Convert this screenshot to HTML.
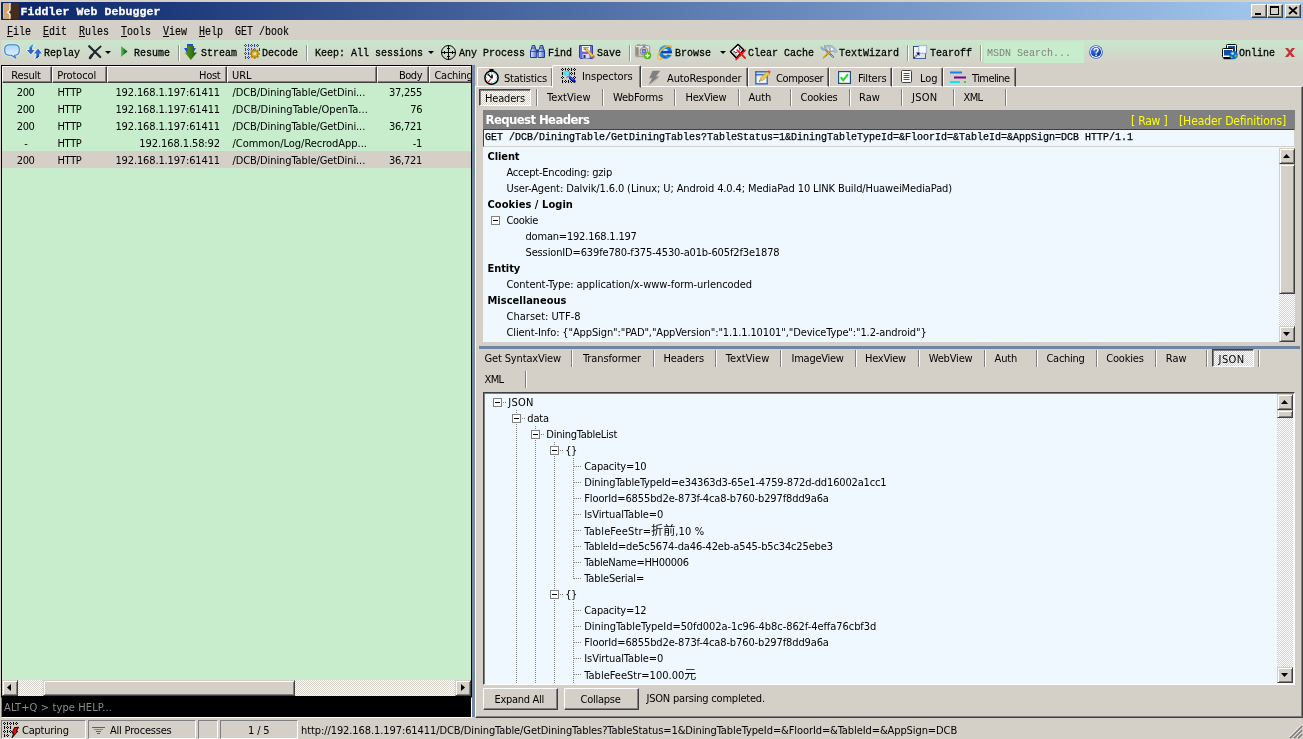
<!DOCTYPE html>
<html><head><meta charset="utf-8"><title>Fiddler Web Debugger</title>
<style>
*{box-sizing:border-box;margin:0;padding:0}
html,body{width:1303px;height:739px;overflow:hidden;background:#d4d0c8}
body{position:relative;will-change:transform;font-family:"DejaVu Sans Condensed","Liberation Sans","Noto Sans CJK SC",sans-serif;font-size:11px;letter-spacing:-0.1px;color:#000;line-height:16px}
.a{position:absolute;white-space:nowrap}
.m{font-family:"Liberation Mono","Noto Sans CJK SC",monospace;font-size:11.5px;letter-spacing:0.1px;font-weight:bold;-webkit-text-stroke:0.3px #fff}
.m12{font-family:"Liberation Mono","Noto Sans CJK SC",monospace;font-size:11.8px;letter-spacing:0;font-weight:normal;-webkit-text-stroke:0.3px #000;transform:scaleX(0.8475);transform-origin:0 0}
u{text-decoration:underline}
svg{position:absolute;overflow:visible}
#title{left:1px;top:2px;width:1302px;height:18px;background:linear-gradient(90deg,#0a246a 0%,#a6caf0 100%)}
.wb{top:2px;width:16px;height:14px;background:#d4d0c8;border:1px solid;border-color:#fff #404040 #404040 #fff;box-shadow:inset -1px -1px 0 #808080}
#tb{left:1px;top:40px;width:1302px;height:23px;background:linear-gradient(180deg,#c9e7cc 0%,#d4d2c8 100%)}
.tx{top:5px;line-height:16px}
.sep{top:5px;width:2px;height:16px;border-left:1px solid #8c9a8c;border-right:1px solid #fff}
#list{left:1px;top:65px;width:471px;height:632px;background:#c7edcc;border:1px solid #000;overflow:hidden}
.hd{top:0;height:17px;background:#d4d0c8;border:1px solid;border-color:#fff #404040 #404040 #fff;box-shadow:inset -1px -1px 0 #808080;line-height:15px}
.row{left:0;width:469px;height:17px;line-height:17px}
.row span{position:absolute;top:1px}
.raised{background:#d4d0c8;border:1px solid;border-color:#fff #404040 #404040 #fff;box-shadow:inset -1px -1px 0 #808080}
.sbtn{background:#d4d0c8;border:1px solid;border-color:#d4d0c8 #404040 #404040 #d4d0c8;box-shadow:inset 1px 1px 0 #fff,inset -1px -1px 0 #808080}
.sunk{border:1px solid;border-color:#808080 #fff #fff #808080}
.vs{width:2px;border-left:1px solid #808080;border-right:1px solid #fff}
.dith{background-color:#d4d0c8;background-image:conic-gradient(#fff 25%,#d4d0c8 0 50%,#fff 0 75%,#d4d0c8 0);background-size:2px 2px}
.tab{top:3px;height:19px;border:1px solid;border-color:#fff #404040 transparent #fff;border-radius:2px 2px 0 0;box-shadow:inset -1px 0 0 #808080}
.tab.sel{top:0;height:23px;background:#d4d0c8;z-index:2}
.tl{position:absolute;top:2px;line-height:16px}
.h{font-weight:bold}
.hdot{height:1px;background:repeating-linear-gradient(90deg,#808080 0 1px,transparent 1px 2px)}
.vdot{width:1px;background:repeating-linear-gradient(180deg,#808080 0 1px,transparent 1px 2px)}
</style></head><body>
<div class="a" id="title">
<svg style="left:2px;top:1px" width="16" height="16" viewBox="0 0 16 16"><rect x="0" y="0" width="16" height="16" rx="1.2" fill="#452c1c"/><path d="M1.2 0H7.2C6 2 7.4 5 6.6 7.4L4.4 9.3L6.6 11C7.6 13 6 15 7 16H1.2Q0 16 0 14.8V1.2Q0 0 1.2 0Z" fill="#d2a670"/><path d="M0.5 0.5V15.5" stroke="#e8b878" stroke-width="1"/><path d="M7.4 0C6.2 2 7.6 5 6.8 7.4L4.6 9.3L6.8 11C7.8 13 6.2 15 7.2 16" fill="none" stroke="#fff" stroke-width="1.3"/></svg>
<div class="a m" style="left:19.5px;top:1px;color:#fff;line-height:18px">Fiddler Web Debugger</div>
<div class="a wb" style="left:1250px"><svg style="left:3px;top:8px" width="6" height="2"><rect width="6" height="2" fill="#000"/></svg></div>
<div class="a wb" style="left:1266px"><svg style="left:2px;top:1px" width="9" height="9"><path d="M0 0H9V9H0Z M1 2V8H8V2Z" fill="#000" fill-rule="evenodd"/></svg></div>
<div class="a wb" style="left:1284px"><svg style="left:3px;top:2px" width="8" height="7"><path d="M0 0L8 7M8 0L0 7" stroke="#000" stroke-width="1.7"/></svg></div>
</div>
<div class="a m12" style="left:7px;top:24px;line-height:17px;font-size:12.6px;transform:scaleX(0.7937);-webkit-text-stroke:0.15px #000"><u>F</u>ile</div>
<div class="a m12" style="left:43px;top:24px;line-height:17px;font-size:12.6px;transform:scaleX(0.7937);-webkit-text-stroke:0.15px #000"><u>E</u>dit</div>
<div class="a m12" style="left:79px;top:24px;line-height:17px;font-size:12.6px;transform:scaleX(0.7937);-webkit-text-stroke:0.15px #000"><u>R</u>ules</div>
<div class="a m12" style="left:121px;top:24px;line-height:17px;font-size:12.6px;transform:scaleX(0.7937);-webkit-text-stroke:0.15px #000"><u>T</u>ools</div>
<div class="a m12" style="left:163px;top:24px;line-height:17px;font-size:12.6px;transform:scaleX(0.7937);-webkit-text-stroke:0.15px #000"><u>V</u>iew</div>
<div class="a m12" style="left:199px;top:24px;line-height:17px;font-size:12.6px;transform:scaleX(0.7937);-webkit-text-stroke:0.15px #000"><u>H</u>elp</div>
<div class="a m12" style="left:235px;top:24px;line-height:17px;font-size:12.6px;transform:scaleX(0.7937);-webkit-text-stroke:0.15px #000">GET /book</div>
<div class="a" id="tb">
<div class="a m12 tx" style="left:43px;">Replay</div>
<div class="a m12 tx" style="left:133px;">Resume</div>
<div class="a sep" style="left:177px"></div>
<div class="a m12 tx" style="left:200px;">Stream</div>
<div class="a m12 tx" style="left:261px;">Decode</div>
<div class="a sep" style="left:305px"></div>
<div class="a m12 tx" style="left:314px;">Keep: All sessions</div>
<div class="a m12 tx" style="left:458px;">Any Process</div>
<div class="a m12 tx" style="left:547px;">Find</div>
<div class="a m12 tx" style="left:595.5px;">Save</div>
<div class="a sep" style="left:628px"></div>
<div class="a m12 tx" style="left:674px;">Browse</div>
<div class="a m12 tx" style="left:746.5px;">Clear Cache</div>
<div class="a m12 tx" style="left:838px;">TextWizard</div>
<div class="a sep" style="left:906px"></div>
<div class="a m12 tx" style="left:928.5px;">Tearoff</div>
<div class="a sep" style="left:979px"></div>
<div class="a" style="left:983px;top:2px;width:100px;height:21px;background:#c7edcc"></div>
<div class="a m12 tx" style="left:985.5px;color:#808080;-webkit-text-stroke:0">MSDN Search...</div>
<div class="a m12 tx" style="left:1238px;">Online</div>
<svg style="left:0;top:0" width="0" height="0"><defs><linearGradient id="gb" x1="0" y1="0" x2="0" y2="1"><stop offset="0" stop-color="#a8d4ff"/><stop offset="1" stop-color="#eef7ff"/></linearGradient><linearGradient id="gg" x1="0" y1="0" x2="1" y2="0"><stop offset="0" stop-color="#62c062"/><stop offset="0.6" stop-color="#1a7a1a"/><stop offset="1" stop-color="#0a5a0a"/></linearGradient><linearGradient id="gs" x1="0" y1="0" x2="1" y2="0"><stop offset="0" stop-color="#5a9a1e"/><stop offset="1" stop-color="#1e5a0a"/></linearGradient><radialGradient id="gh" cx="0.35" cy="0.3" r="0.8"><stop offset="0" stop-color="#3a7af0"/><stop offset="1" stop-color="#0a2a9a"/></radialGradient><linearGradient id="gbi" x1="0" y1="0" x2="1" y2="0"><stop offset="0" stop-color="#e8f0ff"/><stop offset="1" stop-color="#4a6ac8"/></linearGradient></defs></svg>
<svg style="left:3px;top:4px" width="16" height="15" viewBox="0 0 16 15"><path d="M5.5 0.7H10.5Q15.3 0.7 15.3 5.2V6.8Q15.3 11.3 10.5 11.3H10.4L12 14.3L7.3 11.3H5.5Q0.7 11.3 0.7 6.8V5.2Q0.7 0.7 5.5 0.7Z" fill="url(#gb)" stroke="#fff" stroke-width="2.4" stroke-linejoin="round" opacity="0.55"/><path d="M5.5 0.7H10.5Q15.3 0.7 15.3 5.2V6.8Q15.3 11.3 10.5 11.3H10.4L12 14.3L7.3 11.3H5.5Q0.7 11.3 0.7 6.8V5.2Q0.7 0.7 5.5 0.7Z" fill="url(#gb)" stroke="#3a7cc8" stroke-width="1.1" stroke-linejoin="round"/></svg>
<svg style="left:26px;top:4px" width="15" height="15" viewBox="0 0 15 15"><g stroke="#fff" stroke-width="1.6" stroke-linejoin="round" opacity="0.6"><path d="M7.5 0.6Q4.6 1.2 5.2 6H7.6L3.8 10.6L0 6H2.4Q1.6 1.2 7.5 0.6Z"/><path d="M11 4.6L15 9.4H12.4Q12.8 13.6 8 14.6Q9.8 13 9.4 9.4H7Z"/></g><path d="M7.5 0.6Q4.6 1.2 5.2 6H7.6L3.8 10.6L0 6H2.4Q1.6 1.2 7.5 0.6Z" fill="#2a6ad0"/><path d="M7.5 0.6Q5.4 1 5.1 3.2L2.4 3.6Q3 1 7.5 0.6Z" fill="#28b0e0"/><path d="M11 4.6L15 9.4H12.4Q12.8 13.6 8 14.6Q9.8 13 9.4 9.4H7Z" fill="#2a6ad0"/><path d="M10.4 12Q10 13.6 8 14.6Q11.6 13.8 12.2 11.4Z" fill="#143a90"/></svg>
<svg style="left:87px;top:5px" width="14" height="14" viewBox="0 0 14 14"><path d="M1.2 1.2L12.2 12" stroke="#22262c" stroke-width="2.3" stroke-linecap="round"/><path d="M12.6 1.6Q7 6 2.2 12.6" stroke="#22262c" stroke-width="1.9" stroke-linecap="round" fill="none"/><path d="M4 10L2 13" stroke="#22262c" stroke-width="2.6" stroke-linecap="round"/></svg>
<svg style="left:104px;top:11px" width="6" height="3" viewBox="0 0 6 3"><path d="M0 0H6L3 3Z" fill="#000"/></svg>
<svg style="left:120px;top:6px" width="7" height="11" viewBox="0 0 7 11"><path d="M0 0L6.5 5.5L0 11Z" fill="url(#gg)"/></svg>
<svg style="left:183px;top:4px" width="13" height="16" viewBox="0 0 13 16"><path d="M3 0H9V4H12L9 9H3L0 4H3Z" fill="#1e4ae0"/><path d="M3.5 2H10V8.5H13L6.8 16L0.8 8.5H3.5Z" fill="url(#gs)"/></svg>
<svg style="left:243px;top:4px" width="16" height="15" viewBox="0 0 16 15"><path d="M1 0h1v1h-1zM0 1h1v1h-1zM2 1h1v1h-1zM1 2h1v1h-1zM4 0h1v3h-1zM7 0h1v1h-1zM6 1h1v1h-1zM8 1h1v1h-1zM7 2h1v1h-1zM10 0h1v3h-1zM13 0h1v1h-1zM12 1h1v1h-1zM14 1h1v1h-1zM13 2h1v1h-1zM1 4h1v3h-1zM4 4h1v1h-1zM3 5h1v1h-1zM5 5h1v1h-1zM4 6h1v1h-1zM7 4h1v3h-1zM10 4h1v1h-1zM9 5h1v1h-1zM11 5h1v1h-1zM10 6h1v1h-1zM15 4h1v3h-1zM1 8h1v1h-1zM0 9h1v1h-1zM2 9h1v1h-1zM1 10h1v1h-1zM4 8h1v3h-1zM7 8h1v1h-1zM6 9h1v1h-1zM8 9h1v1h-1zM7 10h1v1h-1zM1 12h1v3h-1zM4 12h1v1h-1zM3 13h1v1h-1zM5 13h1v1h-1zM4 14h1v1h-1z" fill="#2a3cc0" shape-rendering="crispEdges"/><g transform="translate(10.7,9.8)"><rect x="-1.1" y="-5.2" width="2.2" height="3" fill="#c09410" transform="rotate(0)"/><rect x="-1.1" y="-5.2" width="2.2" height="3" fill="#c09410" transform="rotate(45)"/><rect x="-1.1" y="-5.2" width="2.2" height="3" fill="#c09410" transform="rotate(90)"/><rect x="-1.1" y="-5.2" width="2.2" height="3" fill="#c09410" transform="rotate(135)"/><rect x="-1.1" y="-5.2" width="2.2" height="3" fill="#c09410" transform="rotate(180)"/><rect x="-1.1" y="-5.2" width="2.2" height="3" fill="#c09410" transform="rotate(225)"/><rect x="-1.1" y="-5.2" width="2.2" height="3" fill="#c09410" transform="rotate(270)"/><rect x="-1.1" y="-5.2" width="2.2" height="3" fill="#c09410" transform="rotate(315)"/><circle r="3.5" fill="#dcb020" stroke="#8a6a08" stroke-width="0.7"/><circle r="1.5" fill="#cfe6d0"/></g></svg>
<svg style="left:440px;top:5px" width="15" height="15" viewBox="0 0 15 15"><circle cx="7.5" cy="7.5" r="7" fill="none" stroke="#000" stroke-width="1"/><path d="M7.5 0V15M0 7.5H15" stroke="#000" stroke-width="1"/><path d="M6 3.5H9M6 11.5H9M3.5 6V9M11.5 6V9" stroke="#000" stroke-width="1"/></svg>
<svg style="left:529px;top:5px" width="15" height="13" viewBox="0 0 15 13"><path d="M2.2 0.5H4.8L5.3 3L6.8 6V12.5H0.5V6L1.8 3Z" fill="url(#gbi)" stroke="#1e3c9a" stroke-width="1"/><path d="M10.2 0.5H12.8L13.3 3L14.5 6V12.5H8.2V6L9.8 3Z" fill="url(#gbi)" stroke="#1e3c9a" stroke-width="1"/><rect x="6.5" y="4.5" width="2" height="3" fill="#1e3c9a"/><path d="M0.5 6.5H6.8M8.2 6.5H14.5" stroke="#1e3c9a" stroke-width="0.8"/><path d="M1.5 3H5.5M9.5 3H13.5" stroke="#1e3c9a" stroke-width="0.8"/></svg>
<svg style="left:578px;top:5px" width="16" height="14" viewBox="0 0 16 14"><path d="M0.5 0.5H13.5V13.5H1.5L0.5 12.5Z" fill="#6c6ce0" stroke="#3838a8" stroke-width="1"/><rect x="3" y="1" width="8" height="5.5" fill="#fff"/><path d="M4 2.5H10M4 4.2H8" stroke="#8080c0" stroke-width="0.8"/><rect x="3.5" y="9" width="7" height="4.5" fill="#d8d8e8"/><rect x="4.5" y="10" width="2" height="3" fill="#303060"/><path d="M5.5 3.5L7.5 2.8L14.8 10.5L12.8 12.5Z" fill="#f0c84a" stroke="#8a6a20" stroke-width="0.5"/><path d="M5.2 3.2L7 4.8L6.3 5.2Z" fill="#303030"/><path d="M12.8 12.5L14.8 10.5L15.8 11.8Q16 13.5 14.2 13.6Z" fill="#e05a4a"/></svg>
<svg style="left:634px;top:4px" width="16" height="16" viewBox="0 0 16 16"><defs><linearGradient id="gcam" x1="0" y1="0" x2="0" y2="1"><stop offset="0" stop-color="#f0ebe2"/><stop offset="1" stop-color="#c4bcb0"/></linearGradient></defs><rect x="2" y="0.2" width="3.4" height="2" fill="#a8a096"/><rect x="7" y="0.2" width="4" height="2" fill="#b0a89e"/><rect x="0.5" y="1.5" width="14.2" height="11.2" rx="1.2" fill="url(#gcam)" stroke="#9c948a" stroke-width="0.9"/><rect x="0.8" y="3" width="3" height="9" fill="#a49c92"/><path d="M1.4 4.6L3 5.6L1.4 6.6L3 7.6L1.4 8.6L3 9.6L1.4 10.6" fill="none" stroke="#7c746a" stroke-width="0.6"/><rect x="8" y="1.8" width="2.4" height="1.2" fill="#4898e8"/><circle cx="9" cy="7.2" r="3.9" fill="#d4ccc2" stroke="#8c847a" stroke-width="0.9"/><rect x="6.9" y="5" width="4.2" height="4.4" rx="0.8" fill="#4a6ae0"/><rect x="7.8" y="6.6" width="2.4" height="1.4" fill="#c8a0e8"/><circle cx="12.5" cy="11.6" r="3.7" fill="#4cae10"/><circle cx="12.2" cy="11.2" r="2.6" fill="#6cc828" opacity="0.7"/><path d="M12.5 9.4V13.8M10.3 11.6H14.7" stroke="#fff" stroke-width="1.3"/></svg>
<svg style="left:656px;top:4px" width="16" height="16" viewBox="0 0 16 16"><defs><linearGradient id="gie" x1="0" y1="0" x2="1" y2="1"><stop offset="0" stop-color="#48b8f8"/><stop offset="0.5" stop-color="#1478e0"/><stop offset="1" stop-color="#0a44b8"/></linearGradient></defs><circle cx="8.4" cy="8" r="6.7" fill="url(#gie)"/><path d="M5.8 6.8A2.8 2.5 0 0 1 11.2 6.8Z" fill="#e4f2ff"/><path d="M4.2 7.2H15V9H4.2Z" fill="#0a3cb0"/><path d="M5.8 9.4A2.8 2.4 0 0 0 10.8 10.6L15.6 11.2V9.4Z" fill="#cfe3cb"/><path d="M9 12.4Q12 12.6 14.4 10.6L15 11.6Q12.4 14.4 8.4 14.7Z" fill="#38a8f4" opacity="0.6"/><path d="M14.4 3.6C15 -1.2 3.6 3.6 1 11.8C0 15.6 3 15.6 5 14.4" fill="none" stroke="#f4b424" stroke-width="1.5" stroke-linecap="round"/><path d="M1.2 11C0.6 13.4 1 15 3 15" fill="none" stroke="#fce080" stroke-width="0.8"/></svg>
<svg style="left:719px;top:11px" width="6" height="3" viewBox="0 0 6 3"><path d="M0 0H6L3 3Z" fill="#000"/></svg>
<svg style="left:427px;top:11px" width="6" height="3" viewBox="0 0 6 3"><path d="M0 0H6L3 3Z" fill="#000"/></svg>
<svg style="left:729px;top:4px" width="16" height="16" viewBox="0 0 16 16"><path d="M8 0.4L13.6 5.8L6.4 14L0.4 7.6Z" fill="#fff" stroke="#000" stroke-width="1.2" stroke-linejoin="round"/><path d="M1.6 8.6L3.6 6.8L8.6 11.4L6.4 13.6Z" fill="#c4c4cc"/><path d="M8.6 1.6L12.6 5.6L11 7.4L9 5.4Z" fill="#c4c4cc"/><path d="M3.6 6.8Q5 9.6 7.4 8.4M9 3.4Q10.6 5.6 9.6 6.6" fill="none" stroke="#000" stroke-width="0.8"/><path d="M8 0.4L13.6 5.8L6.4 14L0.4 7.6Z" fill="none" stroke="#000" stroke-width="1.2" stroke-linejoin="round"/><path d="M7.2 6.2L15.2 14.2M15.2 6.4L6.2 15.4" stroke="#f01010" stroke-width="1.7" stroke-linecap="round"/></svg>
<svg style="left:819px;top:5px" width="17" height="14" viewBox="0 0 17 14"><path d="M5 4.4L13.6 12.4" stroke="#4c6484" stroke-width="1.9"/><path d="M5 4.4L13.6 12.4" stroke="#f4f8ff" stroke-width="1" stroke-dasharray="1 1"/><path d="M1 1.6Q0.4 4.2 3 5.2Q5.6 5.6 6.2 3.4Q6.4 1.2 4.6 0L5 2.6L3.2 3.4L1.8 2.4Z" fill="#a8b8d4" stroke="#6c7c9c" stroke-width="0.5"/><path d="M10.4 6L3.6 12.6" stroke="#eca414" stroke-width="2"/><path d="M9.8 7.2L3.4 13.2" stroke="#4a3000" stroke-width="0.8" stroke-dasharray="0.8 1.2"/><path d="M6.6 0.6Q9.6 -0.4 12.6 1.2Q15.2 3 17 6.4L15.4 8L13.4 6L11.2 6.8L9.8 5.4Q10.4 2.6 6.6 0.6Z" fill="#b4c0dc" stroke="#7080a4" stroke-width="0.5"/><path d="M10.8 2.6L13.6 4.2L11.2 5.6Z" fill="#fff"/></svg>
<svg style="left:912px;top:5px" width="15" height="14" viewBox="0 0 15 14"><defs><linearGradient id="gto" x1="0" y1="0" x2="1" y2="1"><stop offset="0" stop-color="#f8f8fc"/><stop offset="1" stop-color="#dcdce4"/></linearGradient></defs><rect x="0.5" y="1.5" width="12" height="12" fill="url(#gto)" stroke="#4462a0" stroke-width="1"/><path d="M0.5 13V1.5H5" stroke="#2c4a8c" stroke-width="1" fill="none"/><rect x="5.6" y="0.4" width="8" height="8" fill="#e4ecf8"/><rect x="7" y="2" width="5.4" height="5" fill="#f4faff"/><rect x="5.6" y="0.4" width="8" height="8" fill="none" stroke="#7088b8" stroke-width="1" stroke-dasharray="1 1"/><path d="M1.2 12.8L4.6 9.4" stroke="#0c1440" stroke-width="1.3" stroke-dasharray="1.3 0.7"/><path d="M6.6 7.4L6.4 11L3 7.6Z" fill="#0c1440"/></svg>
<svg style="left:1088px;top:5px" width="14" height="14" viewBox="0 0 14 14"><circle cx="7" cy="7" r="6.8" fill="#2a5ad0"/><circle cx="7" cy="7" r="5.9" fill="#fff"/><circle cx="7" cy="7" r="5.1" fill="url(#gh)"/><path d="M5 5.4Q5.2 3.4 7.2 3.4Q9.2 3.5 9.1 5.2Q9 6.3 7.8 7Q7.1 7.5 7.1 8.4" fill="none" stroke="#fff" stroke-width="1.4"/><circle cx="7.1" cy="10.3" r="0.9" fill="#fff"/></svg>
<svg style="left:1221px;top:4px" width="17" height="16" viewBox="0 0 17 16"><rect x="4.5" y="0.5" width="10" height="9" rx="1" fill="#fff" stroke="#000" stroke-width="1"/><rect x="6" y="2" width="7" height="6" fill="#0a50a0"/><rect x="0.5" y="4.5" width="11" height="9" rx="1" fill="#fff" stroke="#000" stroke-width="1"/><rect x="2" y="6" width="8" height="5.5" fill="#0a50a0"/><path d="M1.5 14.5H10.5" stroke="#000" stroke-width="1.4"/><circle cx="11.5" cy="11" r="4.3" fill="#1e5ae8"/><path d="M9 8.6Q11 7.6 12.4 8.4Q11.4 10 9.6 10.2Q8.4 9.6 9 8.6ZM12.6 10.6Q14.6 10 15.4 11.6Q14.6 13.6 13 13.4Q12 12 12.6 10.6ZM8.4 12Q10 11.6 10.6 13Q10.4 14.6 9.4 14.6Q8 13.6 8.4 12Z" fill="#28d828"/><circle cx="10.6" cy="9.6" r="1.2" fill="#d8f0ff" opacity="0.9"/></svg>
<svg style="left:1284px;top:8px" width="10" height="9" viewBox="0 0 10 9"><path d="M0 0H3L5 2.6L7 0H10L6.4 4.4L10 9H6.8L5 6.4L3.2 9H0L3.6 4.4Z" fill="#c83038"/></svg>
</div>
<div class="a" id="list">
<div class="a hd" style="left:0px;width:50px"><span class="a" style="left:8.3px;top:1px;letter-spacing:-0.17px">Result</span></div>
<div class="a hd" style="left:50px;width:55px"><span class="a" style="left:4.3px;top:1px;letter-spacing:-0.14px">Protocol</span></div>
<div class="a hd" style="left:105px;width:120px"><span class="a" style="right:5.5px;top:1px;letter-spacing:-0.26px">Host</span></div>
<div class="a hd" style="left:225px;width:150px"><span class="a" style="left:4px;top:1px;letter-spacing:-0.05px">URL</span></div>
<div class="a hd" style="left:375px;width:52px"><span class="a" style="right:6px;top:1px;letter-spacing:-0.50px">Body</span></div>
<div class="a hd" style="left:427px;width:60px"><span class="a" style="left:4.5px;top:1px;letter-spacing:-0.29px">Caching</span></div>
<div class="a row" style="top:17px;"><span style="left:14.8px;letter-spacing:-0.40px;">200</span><span style="left:55.5px;letter-spacing:-0.33px">HTTP</span><span style="right:251px;letter-spacing:-0.14px">192.168.1.197:61411</span><span style="left:230.5px;letter-spacing:-0.09px">/DCB/DiningTable/GetDini...</span><span style="right:49px;letter-spacing:-0.26px">37,255</span></div>
<div class="a row" style="top:34px;"><span style="left:14.8px;letter-spacing:-0.40px;">200</span><span style="left:55.5px;letter-spacing:-0.33px">HTTP</span><span style="right:251px;letter-spacing:-0.14px">192.168.1.197:61411</span><span style="left:230.5px;letter-spacing:0.02px">/DCB/DiningTable/OpenTa...</span><span style="right:49px;letter-spacing:-0.45px">76</span></div>
<div class="a row" style="top:51px;"><span style="left:14.8px;letter-spacing:-0.40px;">200</span><span style="left:55.5px;letter-spacing:-0.33px">HTTP</span><span style="right:251px;letter-spacing:-0.14px">192.168.1.197:61411</span><span style="left:230.5px;letter-spacing:-0.09px">/DCB/DiningTable/GetDini...</span><span style="right:49px;letter-spacing:-0.26px">36,721</span></div>
<div class="a row" style="top:68px;"><span style="left:22.3px;">-</span><span style="left:55.5px;letter-spacing:-0.33px">HTTP</span><span style="right:251px;letter-spacing:-0.09px">192.168.1.58:92</span><span style="left:230.5px;letter-spacing:-0.03px">/Common/Log/RecrodApp...</span><span style="right:49px;letter-spacing:-0.34px">-1</span></div>
<div class="a row" style="top:85px;background:#d4d0c8;"><span style="left:14.8px;letter-spacing:-0.40px;">200</span><span style="left:55.5px;letter-spacing:-0.33px">HTTP</span><span style="right:251px;letter-spacing:-0.14px">192.168.1.197:61411</span><span style="left:230.5px;letter-spacing:-0.09px">/DCB/DiningTable/GetDini...</span><span style="right:49px;letter-spacing:-0.26px">36,721</span></div>
<div class="a dith" style="left:0;top:614px;width:469px;height:16px"></div>
<div class="a sbtn" style="left:0;top:614px;width:16px;height:16px"><svg style="left:4px;top:3px" width="4" height="7"><path d="M4 0V7L0 3.5Z" fill="#000"/></svg></div>
<div class="a sbtn" style="left:453px;top:614px;width:16px;height:16px"><svg style="left:5px;top:3px" width="4" height="7"><path d="M0 0V7L4 3.5Z" fill="#000"/></svg></div>
<div class="a sbtn" style="left:41px;top:614px;width:252px;height:16px"></div>
</div>
<div class="a" style="left:1px;top:697px;width:471px;height:21px;background:#000;border:1px solid;border-color:#000 #fff #fff #808080;color:#8c8c8c"><span class="a" style="left:2px;top:2px;line-height:16px;letter-spacing:0.12px">ALT+Q &gt; type HELP...</span></div>
<div class="a" style="left:472px;top:65px;width:3px;height:652px;background:#788ba6"></div>
<div class="a sunk" style="left:1px;top:720px;width:85px;height:19px;line-height:17px"><span class="a" style="left:20px;top:1px;letter-spacing:-0.23px">Capturing</span></div>
<div class="a sunk" style="left:88px;top:720px;width:108px;height:19px;line-height:17px"><span class="a" style="left:21px;top:1px;letter-spacing:-0.20px">All Processes</span></div>
<div class="a sunk" style="left:198px;top:720px;width:20px;height:19px;line-height:17px"></div>
<div class="a sunk" style="left:220px;top:720px;width:78px;height:19px;line-height:17px"><span class="a" style="left:27px;top:1px;letter-spacing:-0.14px">1 / 5</span></div>
<div class="a" style="left:301px;top:722px;line-height:17px;letter-spacing:-0.09px">http://192.168.1.197:61411/DCB/DiningTable/GetDiningTables?TableStatus=1&amp;DiningTableTypeId=&amp;FloorId=&amp;TableId=&amp;AppSign=DCB</div>
<svg style="left:3px;top:722px;z-index:3" width="16" height="16" viewBox="0 0 16 16"><path d="M1 0h1v1h-1zM0 1h1v1h-1zM2 1h1v1h-1zM1 2h1v1h-1zM4 0h1v3h-1zM7 0h1v1h-1zM6 1h1v1h-1zM8 1h1v1h-1zM7 2h1v1h-1zM10 0h1v3h-1zM13 0h1v1h-1zM12 1h1v1h-1zM14 1h1v1h-1zM13 2h1v1h-1zM1 4h1v3h-1zM4 4h1v1h-1zM3 5h1v1h-1zM5 5h1v1h-1zM4 6h1v1h-1zM7 4h1v3h-1zM1 8h1v1h-1zM0 9h1v1h-1zM2 9h1v1h-1zM1 10h1v1h-1zM4 8h1v3h-1zM7 8h1v1h-1zM6 9h1v1h-1zM8 9h1v1h-1zM7 10h1v1h-1zM1 12h1v3h-1zM4 12h1v1h-1zM3 13h1v1h-1zM5 13h1v1h-1zM4 14h1v1h-1z" fill="#000" shape-rendering="crispEdges"/><path d="M11.4 5.6L15.6 5.2L13.2 9.2L14.8 9.2L9 15.8L10.8 11L9.2 11.2Z" fill="#ff0808" stroke="#000" stroke-width="0.9" stroke-linejoin="round"/></svg>
<svg style="left:92px;top:727px;z-index:3" width="13" height="8" viewBox="0 0 13 8"><path d="M0 0.5H13" stroke="#3a5ad0" stroke-width="1"/><path d="M2 2.5H11" stroke="#6a86c8" stroke-width="1"/><path d="M4 4.5H9" stroke="#3a5ad0" stroke-width="1"/><path d="M5 6.5H8" stroke="#3a5ad0" stroke-width="1"/></svg>
<svg style="left:1289px;top:725px" width="14" height="14" viewBox="0 0 14 14"><path d="M13 1L1 13M13 5L5 13M13 9L9 13" stroke="#808080" stroke-width="2" fill="none"/><path d="M12.2 0.2L0.2 12.2M12.2 4.2L4.2 12.2M12.2 8.2L8.2 12.2" stroke="#fff" stroke-width="1" fill="none"/></svg>
<div class="a" id="right" style="left:475px;top:65px;width:828px;height:655px">
<div class="a " style="left:0px;top:21px;width:828px;height:632px;border:1px solid;border-color:#fff #404040 #404040 #fff;box-shadow:inset -1px -1px 0 #808080"></div>
<div class="a tab" style="left:2px;top:2px;width:76px;height:20px;"><span class="tl" style="left:26px;top:3px;letter-spacing:-0.23px">Statistics</span></div>
<div class="a tab sel" style="left:77px;top:0px;width:89px;height:23px;"><span class="tl" style="left:29px;top:3px;letter-spacing:-0.07px">Inspectors</span></div>
<div class="a tab" style="left:166px;top:2px;width:107px;height:20px;"><span class="tl" style="left:25px;top:3px;letter-spacing:-0.10px">AutoResponder</span></div>
<div class="a tab" style="left:273px;top:2px;width:81px;height:20px;"><span class="tl" style="left:27px;top:3px;letter-spacing:-0.37px">Composer</span></div>
<div class="a tab" style="left:354px;top:2px;width:63px;height:20px;"><span class="tl" style="left:28px;top:3px;letter-spacing:-0.17px">Filters</span></div>
<div class="a tab" style="left:417px;top:2px;width:51px;height:20px;"><span class="tl" style="left:27px;top:3px;letter-spacing:-0.09px">Log</span></div>
<div class="a tab" style="left:468px;top:2px;width:73px;height:20px;"><span class="tl" style="left:28px;top:3px;letter-spacing:-0.57px">Timeline</span></div>
<svg style="left:9px;top:4px;z-index:3" width="15" height="16" viewBox="0 0 15 16"><rect x="5.5" y="0" width="4" height="2.2" fill="#000"/><circle cx="7.5" cy="8.7" r="6.6" fill="#fff" stroke="#000" stroke-width="1.5"/><rect x="12.0" y="8.0" width="1.2" height="1.2" fill="#00e8f0"/><rect x="11.3" y="10.5" width="1.2" height="1.2" fill="#00e8f0"/><rect x="9.5" y="12.3" width="1.2" height="1.2" fill="#00e8f0"/><rect x="7.0" y="13.0" width="1.2" height="1.2" fill="#00e8f0"/><rect x="4.5" y="12.3" width="1.2" height="1.2" fill="#00e8f0"/><rect x="2.7" y="10.5" width="1.2" height="1.2" fill="#00e8f0"/><rect x="2.0" y="8.0" width="1.2" height="1.2" fill="#00e8f0"/><rect x="2.7" y="5.5" width="1.2" height="1.2" fill="#00e8f0"/><rect x="4.5" y="3.7" width="1.2" height="1.2" fill="#00e8f0"/><rect x="7.0" y="3.0" width="1.2" height="1.2" fill="#00e8f0"/><rect x="9.5" y="3.7" width="1.2" height="1.2" fill="#00e8f0"/><rect x="11.3" y="5.5" width="1.2" height="1.2" fill="#00e8f0"/><path d="M8 9.6V5.4" stroke="#000" stroke-width="1.5"/><path d="M7.8 9.2L3.8 5" stroke="#000" stroke-width="1.2"/><path d="M7 9.8L3.8 13.6" stroke="#f01818" stroke-width="1.2"/></svg>
<svg style="left:86px;top:3px;z-index:3" width="16" height="15" viewBox="0 0 16 15"><path d="M1 0h1v1h-1zM0 1h1v1h-1zM2 1h1v1h-1zM1 2h1v1h-1zM4 0h1v3h-1zM7 0h1v1h-1zM6 1h1v1h-1zM8 1h1v1h-1zM7 2h1v1h-1zM10 0h1v3h-1zM13 0h1v1h-1zM12 1h1v1h-1zM14 1h1v1h-1zM13 2h1v1h-1zM1 4h1v3h-1zM10 4h1v1h-1zM9 5h1v1h-1zM11 5h1v1h-1zM10 6h1v1h-1zM13 4h1v3h-1zM1 8h1v1h-1zM0 9h1v1h-1zM2 9h1v1h-1zM1 10h1v1h-1zM13 8h1v1h-1zM12 9h1v1h-1zM14 9h1v1h-1zM13 10h1v1h-1zM1 12h1v3h-1zM4 12h1v1h-1zM3 13h1v1h-1zM5 13h1v1h-1zM4 14h1v1h-1zM7 12h1v3h-1zM10 12h1v1h-1zM9 13h1v1h-1zM11 13h1v1h-1zM10 14h1v1h-1z" fill="#000" shape-rendering="crispEdges"/><path d="M7 2.5Q9 4 8.4 7L6 9.5" stroke="#000" stroke-width="1" fill="none"/><circle cx="5.5" cy="5.4" r="2.9" fill="#20e8f0" stroke="#c8c8d0" stroke-width="0.7"/><path d="M4.5 4.5h1v1h-1zM6.5 4.5h1v1h-1zM5.5 6.5h1v1h-1z" fill="#c8fcff"/><path d="M9.4 10.2L13.4 13.4" stroke="#000" stroke-width="2.6" stroke-linecap="round"/><path d="M9 9.4L13.2 12.6" stroke="#1010f0" stroke-width="2.4" stroke-linecap="round"/><path d="M9.4 9.8L12.4 12" stroke="#20d8f8" stroke-width="0.8"/></svg>
<svg style="left:173px;top:5px;z-index:3" width="13" height="15" viewBox="0 0 13 15"><path d="M4.6 0.8H12.2L8 6.4H11.4L0.4 15L4.2 8.2H1.2Z" fill="#808080"/><path d="M9.4 8.6L2.4 14.4M10.6 7.8L3.6 13.6" stroke="#b4b0a8" stroke-width="0.5"/></svg>
<svg style="left:280px;top:5px;z-index:3" width="16" height="15" viewBox="0 0 16 15"><rect x="0.8" y="1.8" width="11.4" height="12" fill="#eef4ff" stroke="#3a6ac8" stroke-width="1.4"/><rect x="0.8" y="1.8" width="11.4" height="3" fill="#c8dcff" stroke="#3a6ac8" stroke-width="1.4"/><path d="M12.2 1.6L14.8 3.8L7.6 10.6L5 8.4Z" fill="#f0cc38" stroke="#a08018" stroke-width="0.5"/><path d="M5 8.4L7.6 10.6L4 11.8Z" fill="#d8a878"/><path d="M4 11.8L4.6 10.2L5.4 11.2Z" fill="#303030"/><path d="M12.2 1.6L13.2 0.6Q14.8 0 15.6 1.4L14.8 3.8Z" fill="#e04848"/></svg>
<svg style="left:363px;top:6px;z-index:3" width="13" height="13" viewBox="0 0 13 13"><rect x="0.6" y="0.6" width="11.8" height="11.8" fill="#fff" stroke="#1c5180" stroke-width="1.2"/><path d="M2.8 6.2L5.2 9.4L10 3.2" fill="none" stroke="#20d820" stroke-width="2"/></svg>
<svg style="left:426px;top:5px;z-index:3" width="11" height="13" viewBox="0 0 11 13"><rect x="0.5" y="0.5" width="10" height="12" rx="1" fill="#fff" stroke="#404040" stroke-width="1"/><path d="M2.5 3.5H8.5M2.5 5.5H8.5M2.5 7.5H8.5M2.5 9.5H8.5" stroke="#505050" stroke-width="1"/></svg>
<svg style="left:475px;top:6px;z-index:3" width="16" height="12" viewBox="0 0 16 12"><rect x="0" y="0.5" width="12" height="2" fill="#1880f8"/><rect x="4" y="5.5" width="12" height="2" fill="#800090"/><rect x="0" y="10" width="10" height="2" fill="#00e8f0"/><rect x="14" y="10" width="2" height="2" fill="#20e020"/></svg>
<div class="a dith" style="left:4px;top:24px;width:52px;height:17px;border:1px solid;border-color:#404040 #fff #fff #404040;box-shadow:inset 1px 1px 0 #808080"></div>
<div class="a " style="left:10px;top:26px;letter-spacing:-0.17px;line-height:16px">Headers</div>
<div class="a " style="left:72px;top:25px;letter-spacing:0.03px;line-height:16px">TextView</div>
<div class="a " style="left:138px;top:25px;letter-spacing:-0.19px;line-height:16px">WebForms</div>
<div class="a " style="left:210.5px;top:25px;letter-spacing:-0.27px;line-height:16px">HexView</div>
<div class="a " style="left:273.5px;top:25px;letter-spacing:-0.17px;line-height:16px">Auth</div>
<div class="a " style="left:325.5px;top:25px;letter-spacing:-0.25px;line-height:16px">Cookies</div>
<div class="a " style="left:384px;top:25px;letter-spacing:0.07px;line-height:16px">Raw</div>
<div class="a " style="left:437px;top:25px;letter-spacing:0.28px;line-height:16px">JSON</div>
<div class="a " style="left:488.5px;top:25px;letter-spacing:-0.60px;line-height:16px">XML</div>
<div class="a vs" style="left:61px;top:24px;width:2px;height:17px;"></div>
<div class="a vs" style="left:127px;top:24px;width:2px;height:17px;"></div>
<div class="a vs" style="left:199px;top:24px;width:2px;height:17px;"></div>
<div class="a vs" style="left:263px;top:24px;width:2px;height:17px;"></div>
<div class="a vs" style="left:315px;top:24px;width:2px;height:17px;"></div>
<div class="a vs" style="left:374px;top:24px;width:2px;height:17px;"></div>
<div class="a vs" style="left:426px;top:24px;width:2px;height:17px;"></div>
<div class="a vs" style="left:478px;top:24px;width:2px;height:17px;"></div>
<div class="a vs" style="left:530px;top:24px;width:2px;height:17px;"></div>
<div class="a " style="left:8px;top:45px;width:812px;height:19px;background:#808080"></div>
<div class="a h" style="left:10.5px;top:46px;letter-spacing:-0.60px;color:#fff;font-size:13px;line-height:17px">Request Headers</div>
<div class="a " style="left:656px;top:48px;letter-spacing:-0.22px;color:#ffff00;font-size:12px;line-height:16px">[ Raw ]</div>
<div class="a " style="left:704px;top:48px;letter-spacing:-0.10px;color:#ffff00;font-size:12px;line-height:16px">[Header Definitions]</div>
<div class="a " style="left:8px;top:64px;width:812px;height:18px;background:#f0f8ff;border:1px solid;border-color:#404040 #d4d0c8 #d4d0c8 #404040"></div>
<div class="a m12" style="left:10px;top:64px;line-height:16px;font-size:10.5px;transform:scaleX(0.9524);-webkit-text-stroke:0.25px #000">GET /DCB/DiningTable/GetDiningTables?TableStatus=1&amp;DiningTableTypeId=&amp;FloorId=&amp;TableId=&amp;AppSign=DCB HTTP/1.1</div>
<div class="a " style="left:8px;top:82px;width:812px;height:195px;background:#f0f8ff"></div>
<div class="a h" style="left:12.5px;top:84px;letter-spacing:-0.09px;line-height:16px">Client</div>
<div class="a " style="left:31.5px;top:100px;letter-spacing:-0.21px;line-height:16px">Accept-Encoding: gzip</div>
<div class="a " style="left:31.5px;top:116px;letter-spacing:-0.11px;line-height:16px">User-Agent: Dalvik/1.6.0 (Linux; U; Android 4.0.4; MediaPad 10 LINK Build/HuaweiMediaPad)</div>
<div class="a h" style="left:12.5px;top:132px;letter-spacing:0.06px;line-height:16px">Cookies / Login</div>
<div class="a " style="left:31.5px;top:148px;letter-spacing:-0.35px;line-height:16px">Cookie</div>
<div class="a " style="left:50.5px;top:164px;letter-spacing:-0.20px;line-height:16px">doman=192.168.1.197</div>
<div class="a " style="left:50.5px;top:180px;letter-spacing:-0.14px;line-height:16px">SessionID=639fe780-f375-4530-a01b-605f2f3e1878</div>
<div class="a h" style="left:12.5px;top:196px;letter-spacing:-0.07px;line-height:16px">Entity</div>
<div class="a " style="left:31.5px;top:212px;letter-spacing:-0.06px;line-height:16px">Content-Type: application/x-www-form-urlencoded</div>
<div class="a h" style="left:12.5px;top:228px;letter-spacing:0.02px;line-height:16px">Miscellaneous</div>
<div class="a " style="left:31.5px;top:244px;letter-spacing:0.02px;line-height:16px">Charset: UTF-8</div>
<div class="a " style="left:31.5px;top:260px;letter-spacing:-0.12px;line-height:16px">Client-Info: {"AppSign":"PAD","AppVersion":"1.1.1.10101","DeviceType":"1.2-android"}</div>
<svg style="left:16px;top:151px" width="9" height="9"><rect x="0.5" y="0.5" width="8" height="8" fill="#fff" stroke="#808080"/><path d="M2 4.5H7" stroke="#000"/></svg>
<div class="a dith" style="left:804px;top:83px;width:16px;height:194px;"></div>
<div class="a sbtn" style="left:804px;top:83px;width:16px;height:16px;"><svg style="left:3px;top:5px" width="7" height="4"><path d="M0 4H7L3.5 0Z" fill="#000"/></svg></div>
<div class="a sbtn" style="left:804px;top:261px;width:16px;height:16px;"><svg style="left:3px;top:5px" width="7" height="4"><path d="M0 0H7L3.5 4Z" fill="#000"/></svg></div>
<div class="a sbtn" style="left:804px;top:99px;width:16px;height:130px;"></div>
<div class="a " style="left:4px;top:281px;width:821px;height:3px;background:#6e86a4"></div>
<div class="a " style="left:9.5px;top:286px;letter-spacing:-0.14px;line-height:16px">Get SyntaxView</div>
<div class="a " style="left:108px;top:286px;letter-spacing:-0.11px;line-height:16px">Transformer</div>
<div class="a " style="left:188.5px;top:286px;letter-spacing:-0.11px;line-height:16px">Headers</div>
<div class="a " style="left:250.79999999999995px;top:286px;letter-spacing:0.04px;line-height:16px">TextView</div>
<div class="a " style="left:316.6px;top:286px;letter-spacing:-0.27px;line-height:16px">ImageView</div>
<div class="a " style="left:390px;top:286px;letter-spacing:-0.24px;line-height:16px">HexView</div>
<div class="a " style="left:453.70000000000005px;top:286px;letter-spacing:-0.17px;line-height:16px">WebView</div>
<div class="a " style="left:519.6px;top:286px;letter-spacing:-0.20px;line-height:16px">Auth</div>
<div class="a " style="left:571.5px;top:286px;letter-spacing:-0.29px;line-height:16px">Caching</div>
<div class="a " style="left:631.3px;top:286px;letter-spacing:-0.21px;line-height:16px">Cookies</div>
<div class="a " style="left:690.7px;top:286px;letter-spacing:0.07px;line-height:16px">Raw</div>
<div class="a vs" style="left:96px;top:285px;width:2px;height:17px;"></div>
<div class="a vs" style="left:178px;top:285px;width:2px;height:17px;"></div>
<div class="a vs" style="left:240px;top:285px;width:2px;height:17px;"></div>
<div class="a vs" style="left:305px;top:285px;width:2px;height:17px;"></div>
<div class="a vs" style="left:380px;top:285px;width:2px;height:17px;"></div>
<div class="a vs" style="left:443px;top:285px;width:2px;height:17px;"></div>
<div class="a vs" style="left:509px;top:285px;width:2px;height:17px;"></div>
<div class="a vs" style="left:561px;top:285px;width:2px;height:17px;"></div>
<div class="a vs" style="left:621px;top:285px;width:2px;height:17px;"></div>
<div class="a vs" style="left:680px;top:285px;width:2px;height:17px;"></div>
<div class="a vs" style="left:731px;top:285px;width:2px;height:17px;"></div>
<div class="a vs" style="left:783px;top:285px;width:2px;height:17px;"></div>
<div class="a dith" style="left:737px;top:284px;width:42px;height:18px;border:1px solid;border-color:#404040 #fff #fff #404040;box-shadow:inset 1px 1px 0 #808080"></div>
<div class="a " style="left:743.5999999999999px;top:287px;letter-spacing:0.40px;line-height:16px">JSON</div>
<div class="a " style="left:9.5px;top:307px;letter-spacing:-0.60px;line-height:16px">XML</div>
<div class="a vs" style="left:50px;top:306px;width:2px;height:17px;"></div>
<div class="a " style="left:8px;top:327px;width:812px;height:293px;background:#f0f8ff;border:1px solid;border-color:#404040 #fff #fff #404040;box-shadow:inset 1px 1px 0 #808080"></div>
<div class="a" style="left:10px;top:329px;width:791px;height:289px;overflow:hidden">
<div class="a vdot" style="left:31px;top:16px;height:273px"></div>
<div class="a vdot" style="left:50px;top:32px;height:257px"></div>
<div class="a vdot" style="left:69px;top:48px;height:241px"></div>
<div class="a vdot" style="left:88px;top:64px;height:121px"></div>
<div class="a vdot" style="left:88px;top:208px;height:81px"></div>
<div class="a" style="left:23.3px;top:1px;letter-spacing:0.25px;line-height:16px">JSON</div>
<svg style="left:8px;top:4px" width="9" height="9"><rect x="0.5" y="0.5" width="8" height="8" fill="#fff" stroke="#808080"/><path d="M2 4.5H7" stroke="#000"/></svg>
<div class="a hdot" style="left:18px;top:8px;width:4px"></div>
<div class="a" style="left:42.3px;top:17px;letter-spacing:-0.20px;line-height:16px">data</div>
<svg style="left:27px;top:20px" width="9" height="9"><rect x="0.5" y="0.5" width="8" height="8" fill="#fff" stroke="#808080"/><path d="M2 4.5H7" stroke="#000"/></svg>
<div class="a hdot" style="left:37px;top:24px;width:4px"></div>
<div class="a" style="left:61.3px;top:33px;letter-spacing:-0.26px;line-height:16px">DiningTableList</div>
<svg style="left:46px;top:36px" width="9" height="9"><rect x="0.5" y="0.5" width="8" height="8" fill="#fff" stroke="#808080"/><path d="M2 4.5H7" stroke="#000"/></svg>
<div class="a hdot" style="left:56px;top:40px;width:4px"></div>
<div class="a" style="left:80.3px;top:49px;letter-spacing:-0.60px;line-height:16px">{}</div>
<svg style="left:65px;top:52px" width="9" height="9"><rect x="0.5" y="0.5" width="8" height="8" fill="#fff" stroke="#808080"/><path d="M2 4.5H7" stroke="#000"/></svg>
<div class="a hdot" style="left:75px;top:56px;width:4px"></div>
<div class="a" style="left:99.3px;top:65px;letter-spacing:-0.19px;line-height:16px">Capacity=10</div>
<div class="a hdot" style="left:89px;top:72px;width:8px"></div>
<div class="a" style="left:99.3px;top:81px;letter-spacing:-0.16px;line-height:16px">DiningTableTypeId=e34363d3-65e1-4759-872d-dd16002a1cc1</div>
<div class="a hdot" style="left:89px;top:88px;width:8px"></div>
<div class="a" style="left:99.3px;top:97px;letter-spacing:-0.12px;line-height:16px">FloorId=6855bd2e-873f-4ca8-b760-b297f8dd9a6a</div>
<div class="a hdot" style="left:89px;top:104px;width:8px"></div>
<div class="a" style="left:99.3px;top:113px;letter-spacing:-0.09px;line-height:16px">IsVirtualTable=0</div>
<div class="a hdot" style="left:89px;top:120px;width:8px"></div>
<div class="a" style="left:99.3px;top:129px;letter-spacing:0.13px;line-height:16px">TableFeeStr=<span style="font-size:12px">折前</span>,10 %</div>
<div class="a hdot" style="left:89px;top:136px;width:8px"></div>
<div class="a" style="left:99.3px;top:145px;letter-spacing:-0.14px;line-height:16px">TableId=de5c5674-da46-42eb-a545-b5c34c25ebe3</div>
<div class="a hdot" style="left:89px;top:152px;width:8px"></div>
<div class="a" style="left:99.3px;top:161px;letter-spacing:-0.28px;line-height:16px">TableName=HH00006</div>
<div class="a hdot" style="left:89px;top:168px;width:8px"></div>
<div class="a" style="left:99.3px;top:177px;letter-spacing:-0.16px;line-height:16px">TableSerial=</div>
<div class="a hdot" style="left:89px;top:184px;width:8px"></div>
<div class="a" style="left:80.3px;top:193px;letter-spacing:-0.60px;line-height:16px">{}</div>
<svg style="left:65px;top:196px" width="9" height="9"><rect x="0.5" y="0.5" width="8" height="8" fill="#fff" stroke="#808080"/><path d="M2 4.5H7" stroke="#000"/></svg>
<div class="a hdot" style="left:75px;top:200px;width:4px"></div>
<div class="a" style="left:99.3px;top:209px;letter-spacing:-0.19px;line-height:16px">Capacity=12</div>
<div class="a hdot" style="left:89px;top:216px;width:8px"></div>
<div class="a" style="left:99.3px;top:225px;letter-spacing:-0.06px;line-height:16px">DiningTableTypeId=50fd002a-1c96-4b8c-862f-4effa76cbf3d</div>
<div class="a hdot" style="left:89px;top:232px;width:8px"></div>
<div class="a" style="left:99.3px;top:241px;letter-spacing:-0.12px;line-height:16px">FloorId=6855bd2e-873f-4ca8-b760-b297f8dd9a6a</div>
<div class="a hdot" style="left:89px;top:248px;width:8px"></div>
<div class="a" style="left:99.3px;top:257px;letter-spacing:-0.09px;line-height:16px">IsVirtualTable=0</div>
<div class="a hdot" style="left:89px;top:264px;width:8px"></div>
<div class="a" style="left:99.3px;top:273px;letter-spacing:0.01px;line-height:16px">TableFeeStr=100.00<span style="font-size:12px">元</span></div>
<div class="a hdot" style="left:89px;top:280px;width:8px"></div>
<!--TREELINES-->
</div>
<div class="a dith" style="left:802px;top:329px;width:16px;height:289px;"></div>
<div class="a sbtn" style="left:802px;top:329px;width:16px;height:16px;"><svg style="left:3px;top:5px" width="7" height="4"><path d="M0 4H7L3.5 0Z" fill="#000"/></svg></div>
<div class="a sbtn" style="left:802px;top:602px;width:16px;height:16px;"><svg style="left:3px;top:5px" width="7" height="4"><path d="M0 0H7L3.5 4Z" fill="#000"/></svg></div>
<div class="a sbtn" style="left:802px;top:345px;width:16px;height:8px;"></div>
<div class="a raised" style="left:8px;top:623px;width:75px;height:22px;line-height:21px"><span class="a" style="left:10.5px;top:0;letter-spacing:-0.29px">Expand All</span></div>
<div class="a raised" style="left:89px;top:623px;width:75px;height:22px;line-height:21px"><span class="a" style="left:15.5px;top:0;letter-spacing:-0.26px">Collapse</span></div>
<div class="a " style="left:171.5px;top:626px;letter-spacing:-0.21px;line-height:16px">JSON parsing completed.</div>
</div>
</body></html>
